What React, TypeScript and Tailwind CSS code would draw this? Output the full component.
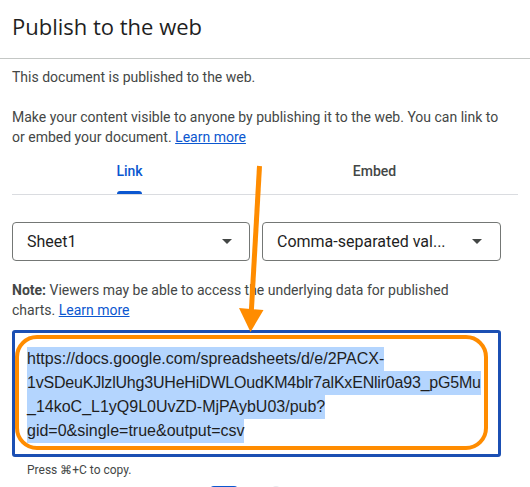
import React from "react";

function Caret() {
  return (
    <svg width="10" height="5" viewBox="0 0 10 5" className="shrink-0">
      <path d="M0 0 L10 0 L5 5 Z" fill="#444746" />
    </svg>
  );
}

export default function App() {
  const lines = [
    { t: "https://docs.google.com/spreadsheets/d/e/2PACX-", c: "" },
    { t: "1vSDeuKJlzlUhg3UHeHiDWLOudKM4blr7alKxENlir0a93_pG5Mu", c: "tracking-[-0.2px]" },
    { t: "_14koC_L1yQ9L0UvZD-MjPAybU03/pub?", c: "" },
    { t: "gid=0&single=true&output=csv", c: "" },
  ];
  return (
    <div
      className="relative w-[530px] h-[487px] overflow-hidden bg-white text-[#444746]"
      style={{ fontFamily: "Roboto, 'Liberation Sans', sans-serif" }}
    >
      {/* Header */}
      <div className="border-b border-[#c4c7c5] pt-[12px] pb-[18px] px-[12px]">
        <h1 className="text-[22px] leading-[28px] text-[#1f1f1f]" style={{ fontFamily: "'Open Sans', Roboto, sans-serif" }}>
          Publish to the web
        </h1>
      </div>

      <div className="px-[12px]">
        <p className="mt-[8px] text-[14px] leading-[20px]">This document is published to the web.</p>
        <p className="mt-[20px] text-[14px] leading-[20px]">
          Make your content visible to anyone by publishing it to the web. You can link to
          <br />
          or embed your document. <span className="text-[#0b57d0] underline">Learn more</span>
        </p>

        {/* Tabs */}
        <div className="border-b border-[#dadce0]">
          <div className="flex -ml-[5px]">
            <div className="w-[245px] h-[47px] flex flex-col items-center pt-[14px]">
              <div className="relative text-[14px] leading-[20px] font-medium text-[#0b57d0]">
                Link
                <div className="absolute left-[1px] right-[1px] top-[30px] h-[3px] rounded-t-[3px] bg-[#0b57d0]" />
              </div>
            </div>
            <div className="w-[245px] h-[47px] flex flex-col items-center pt-[14px]">
              <div className="text-[14px] leading-[20px] font-medium text-[#444746]">Embed</div>
            </div>
          </div>
        </div>

        {/* Dropdowns */}
        <div className="mt-[27px] flex gap-[12px]">
          <div className="w-[238px] h-[39px] border border-[#747775] rounded-[4px] flex items-center pl-[14px] pr-[17px]">
            <span className="flex-1 text-[16px] text-[#1f1f1f]">Sheet1</span>
            <Caret />
          </div>
          <div className="w-[239px] h-[39px] border border-[#747775] rounded-[4px] flex items-center pl-[14px] pr-[18px]">
            <span className="flex-1 text-[16px] text-[#1f1f1f]">Comma-separated val...</span>
            <Caret />
          </div>
        </div>

        {/* Note */}
        <p className="mt-[19px] text-[14px] leading-[20px] pr-[40px]">
          <span className="font-bold">Note:</span> Viewers may be able to access the underlying data for published
          <br />
          charts. <span className="text-[#0b57d0] underline">Learn more</span>
        </p>

        {/* URL box */}
        <div className="relative mt-[10px] w-[489px] h-[127px] border-[3px] border-[#1b4fb3] rounded-[3px] pt-[14px] pl-[12px]">
          <div className="absolute left-0 top-[2px] w-[473px] h-[115px] border-[4px] border-[#ff8c00] rounded-[22px]" />
          <div
            className="text-[16px] leading-[24px] text-[#1f1f1f]"
            style={{ fontFamily: "'Liberation Sans', Arial, sans-serif" }}
          >
            {lines.map((l) => (
              <div key={l.t} className={"w-fit h-[24px] bg-[#b4d5fe] whitespace-nowrap " + l.c}>
                {l.t}
              </div>
            ))}
          </div>
        </div>

        <p className="mt-[5px] ml-[15px] text-[12px] leading-[16px] text-[#444746]">Press ⌘+C to copy.</p>

        <div className="mt-[8px] flex items-start">
          <div className="ml-[198px] w-[28px] h-[10px] rounded-t-[4px] bg-[#0b57d0]" />
          <div className="ml-[34px] w-[8px] h-[10px] rounded-t-full bg-[#e8eaed]" />
        </div>
      </div>

      {/* Annotation arrow */}
      <svg className="absolute left-0 top-0 pointer-events-none" width="530" height="487" viewBox="0 0 530 487">
        <line x1="259.5" y1="166" x2="251.3" y2="312" stroke="#ff8c00" strokeWidth="5" />
        <path d="M239 308 L263.5 310 L250.5 332 Z" fill="#ff8c00" />
      </svg>
    </div>
  );
}
